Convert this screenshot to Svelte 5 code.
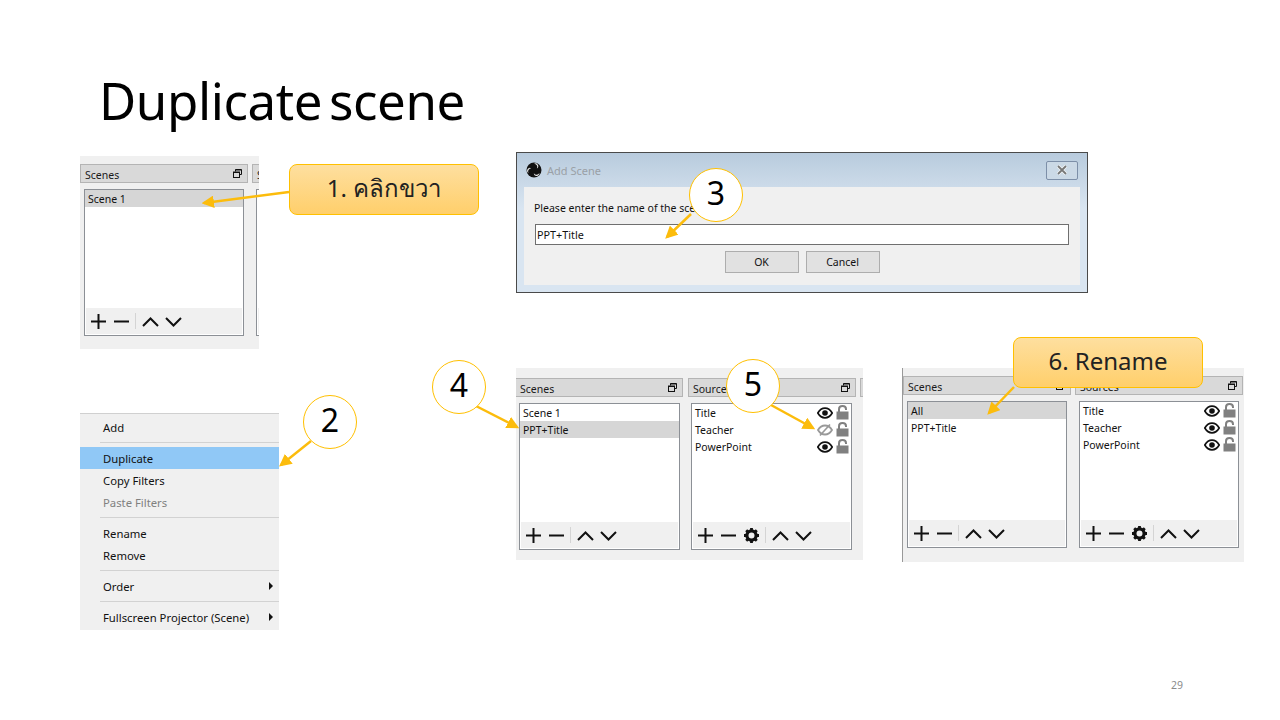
<script lang="ts">
  // Slide "Duplicate scene": OBS screenshots pinned on a slide, with callouts and arrows over them.
  const scenes1 = [{ name: "Scene 1", selected: true }];
  const scenes4 = [{ name: "Scene 1" }, { name: "PPT+Title", selected: true }];
  const scenes6 = [{ name: "All", selected: true }, { name: "PPT+Title" }];

  const sources4 = [
    { name: "Title" },
    { name: "Teacher", hidden: true },
    { name: "PowerPoint" }
  ];
  const sources6 = [{ name: "Title" }, { name: "Teacher" }, { name: "PowerPoint" }];

  const arrows = [
    [289, 192, 204, 203],
    [311, 441, 281, 465],
    [691, 214, 667, 237],
    [476, 406, 517, 427],
    [771, 405, 813, 428],
    [1014, 387, 989, 413]
  ];

  const circles = [
    { n: "2", cls: "c2" },
    { n: "3", cls: "c3" },
    { n: "4", cls: "c4" },
    { n: "5", cls: "c5" }
  ];

  const menu = [
    { label: "Add" },
    { sep: true },
    { label: "Duplicate", active: true },
    { label: "Copy Filters" },
    { label: "Paste Filters", disabled: true },
    { sep: true },
    { label: "Rename" },
    { label: "Remove" },
    { sep: true },
    { label: "Order", sub: true },
    { sep: true },
    { label: "Fullscreen Projector (Scene)", sub: true }
  ];
</script>

{#snippet toolbar(gear)}
  <div class="toolbar">
    <span class="tool">
      <svg width="17" height="17" viewBox="0 0 17 17"><path d="M8.5 1v15M1 8.5h15" class="ico" /></svg>
    </span>
    <span class="tool">
      <svg width="17" height="17" viewBox="0 0 17 17"><path d="M1 8.5h15" class="ico" /></svg>
    </span>
    {#if gear}
      <span class="tool">
        <svg width="17" height="17" viewBox="0 0 17 17">
          <circle cx="8.5" cy="8.5" r="4.6" fill="none" stroke="#111" stroke-width="3.2" />
          <path d="M8.5 1v15M1 8.5h15M3.2 3.2l10.6 10.6M13.8 3.2L3.2 13.8" stroke="#111" stroke-width="2.8" stroke-dasharray="2.6 9.8" fill="none" />
        </svg>
      </span>
    {/if}
    <span class="tool-sep"></span>
    <span class="tool">
      <svg width="17" height="17" viewBox="0 0 17 17"><path d="M1 13l7.5-7.5L16 13" class="ico" /></svg>
    </span>
    <span class="tool">
      <svg width="17" height="17" viewBox="0 0 17 17"><path d="M1 5l7.5 7.5L16 5" class="ico" /></svg>
    </span>
  </div>
{/snippet}

{#snippet dock(title, rows, isSources)}
  <div class="dock">
    <div class="dock-title">
      <span class="dock-name">{title}</span>
      <svg width="9" height="9" viewBox="0 0 9 9" class="restore">
        <path d="M2.500 2.500V.5h6v5H6.500" fill="none" stroke="#111" />
        <path d="M2.500 1h6" fill="none" stroke="#111" />
        <rect x=".5" y="3" width="6" height="5.500" fill="none" stroke="#111" />
        <path d="M.5 3.500h6" fill="none" stroke="#111" />
      </svg>
    </div>
    <div class="list">
      <div class="rows">
        {#each rows as row}
          <div class="row" class:selected={row.selected}>
            <span class="row-name">{row.name}</span>
            {#if isSources}
              {#if row.hidden}
                <svg width="16" height="12" viewBox="0 0 16 12" class="eye">
                  <path d="M1 6c1.800-3 4-4.500 7-4.500S13.200 3 15 6c-1.800 3-4 4.500-7 4.500S2.800 9 1 6z" fill="none" stroke="#999" stroke-width="1.800" />
                  <path d="M3 11.500L13 .5" stroke="#999" stroke-width="1.600" />
                </svg>
              {:else}
                <svg width="16" height="12" viewBox="0 0 16 12" class="eye">
                  <path d="M.8 6c1.900-3.200 4.200-4.800 7.200-4.800S13.300 2.800 15.200 6c-1.900 3.200-4.200 4.800-7.200 4.800S2.700 9.200.8 6z" fill="none" stroke="#111" stroke-width="1.700" />
                  <circle cx="8" cy="6" r="2.800" fill="#111" />
                </svg>
              {/if}
              <svg width="13" height="15" viewBox="0 0 13 15" class="lock">
                <path d="M3 7V4.200C3 2.300 4.500 1 6.500 1S10 2.300 10 4.200v.8" fill="none" stroke="#808080" stroke-width="2" />
                <rect x="0.500" y="6.500" width="12" height="8" fill="#808080" />
              </svg>
            {/if}
          </div>
        {/each}
      </div>
      {@render toolbar(isSources)}
    </div>
  </div>
{/snippet}

<main class="slide">
  <h1 class="heading">Duplicate scene</h1>

  <section class="shot shot1">
    {@render dock("Scenes", scenes1, false)}
    {@render dock("Sources", [], false)}
  </section>

  <section class="dialog">
    <header class="dialog-bar">
      <svg width="16" height="16" viewBox="0 0 16 16">
        <circle cx="8" cy="8" r="7.500" fill="#111" />
        <path d="M8 1.800A3.200 3.200 0 0 1 10.900 6.500A2.600 2.600 0 0 0 8 1.800z" fill="#e8e8e8" />
        <path d="M8 1.800A3.200 3.200 0 0 1 10.900 6.500A2.600 2.600 0 0 0 8 1.800z" fill="#e8e8e8" transform="rotate(120 8 8)" />
        <path d="M8 1.800A3.200 3.200 0 0 1 10.900 6.500A2.600 2.600 0 0 0 8 1.800z" fill="#e8e8e8" transform="rotate(240 8 8)" />
      </svg>
      <span class="dialog-title">Add Scene</span>
      <span class="dialog-close">
        <svg width="12" height="10" viewBox="0 0 12 10">
          <path d="M2 1l8 8M10 1L2 9" stroke="#f4f6f8" stroke-width="3.400" />
          <path d="M2 1l8 8M10 1L2 9" stroke="#777" stroke-width="1.800" />
        </svg>
      </span>
    </header>
    <div class="dialog-body">
      <p class="dialog-label">Please enter the name of the scene</p>
      <div class="dialog-input">PPT+Title</div>
      <div class="dialog-actions">
        <span class="btn">OK</span>
        <span class="btn">Cancel</span>
      </div>
    </div>
  </section>

  <nav class="menu">
    {#each menu as item}
      {#if item.sep}
        <div class="menu-sep"></div>
      {:else}
        <div class="menu-item" class:active={item.active} class:disabled={item.disabled}>
          <span>{item.label}</span>
          {#if item.sub}<i class="caret"></i>{/if}
        </div>
      {/if}
    {/each}
  </nav>

  <section class="shot shot4">
    {@render dock("Scenes", scenes4, false)}
    {@render dock("Sources", sources4, true)}
    {@render dock("", [], false)}
  </section>

  <section class="shot shot6">
    {@render dock("Scenes", scenes6, false)}
    {@render dock("Sources", sources6, true)}
  </section>

  <svg class="arrows" width="1280" height="720" viewBox="0 0 1280 720">
    <defs>
      <marker id="tip" markerWidth="5" markerHeight="5" refX="4" refY="2.500" orient="auto" markerUnits="strokeWidth">
        <path d="M0 0L5 2.500L0 5z" fill="#fcbc0c" />
      </marker>
    </defs>
    {#each arrows as [x1, y1, x2, y2]}
      <line {x1} {y1} {x2} {y2} stroke="#fcbc0c" stroke-width="2.500" marker-end="url(#tip)" />
    {/each}
  </svg>

  <div class="callout call1">1. คลิกขวา</div>
  <div class="callout call6">6. Rename</div>

  {#each circles as c}
    <div class="circle {c.cls}">{c.n}</div>
  {/each}

  <span class="page-no">29</span>
</main>

<style>
  :global(body) {
    margin: 0;
    background: #fff;
  }

  .slide {
    position: relative;
    width: 1280px;
    height: 720px;
    overflow: hidden;
    background: #fff;
    font-family: "Noto Sans", "Open Sans", sans-serif;
    color: #111;
  }

  .heading {
    position: absolute;
    left: 99px;
    top: 63px;
    margin: 0;
    font-size: 51px;
    font-weight: 400;
    letter-spacing: -0.4px;
    word-spacing: -6px;
    line-height: 74px;
    color: #000;
    white-space: nowrap;
  }

  /* screenshots */
  .shot {
    position: absolute;
    display: flex;
    gap: 4px;
    overflow: hidden;
    background: #f0f0f0;
  }

  .shot1 {
    left: 80px;
    top: 156px;
    width: 179px;
    height: 193px;
    padding-top: 8px;
    box-sizing: border-box;
  }

  .shot4 {
    left: 516px;
    top: 368px;
    width: 347px;
    height: 192px;
    padding-top: 10px;
    box-sizing: border-box;
  }

  .shot4 .dock:nth-child(1) {
    margin: 0 1px 0 -1px;
  }

  .shot4 .dock:nth-child(1) .list {
    margin-right: 3px;
  }

  .shot4 .dock:nth-child(2) .list {
    margin-left: 3px;
  }

  .shot6 {
    left: 902px;
    top: 368px;
    width: 342px;
    height: 194px;
    padding-top: 8px;
    box-sizing: border-box;
    border-left: 1px solid #999;
  }

  .dock {
    flex: 0 0 168px;
    width: 168px;
  }

  .dock-title {
    display: flex;
    align-items: center;
    justify-content: space-between;
    height: 19px;
    box-sizing: border-box;
    padding: 2px 5px 0 4px;
    background: #d9d9d9;
    border: 1px solid #b4b4b4;
    font-size: 10.500px;
    color: #1a1a1a;
  }

  .restore {
    flex: none;
    margin-top: -3px;
  }

  .list {
    display: flex;
    flex-direction: column;
    height: 147px;
    margin: 6px 4px 0;
    box-sizing: border-box;
    border: 1px solid #8c9096;
    background: #fff;
  }

  .rows {
    flex: 1;
    min-height: 0;
  }

  .row {
    display: flex;
    align-items: center;
    height: 17px;
    padding: 0 2px 0 3px;
    font-size: 10.500px;
    color: #111;
  }

  .row.selected {
    background: #d6d6d6;
  }

  .row-name {
    flex: 1;
  }

  .eye {
    flex: none;
    margin-right: 3px;
  }

  .lock {
    flex: none;
  }

  .toolbar {
    display: flex;
    align-items: center;
    height: 26px;
    margin: 0 1px 1px;
    padding-left: 1px;
    background: #f0f0f0;
  }

  .tool {
    display: flex;
    align-items: center;
    justify-content: center;
    width: 23px;
    height: 26px;
  }

  .ico {
    fill: none;
    stroke: #111;
    stroke-width: 2;
  }

  .tool-sep {
    width: 1px;
    height: 16px;
    margin: 0 3px 0 2px;
    background: #d4d4d4;
  }

  /* add scene dialog */
  .dialog {
    position: absolute;
    left: 516px;
    top: 152px;
    width: 572px;
    height: 141px;
    box-sizing: border-box;
    display: flex;
    flex-direction: column;
    border: 1px solid #4a4a4a;
    background: linear-gradient(#b8cbdd, #d9e5f1 40%);
    padding: 0 7px 7px;
  }

  .dialog-bar {
    display: flex;
    align-items: center;
    gap: 5px;
    height: 34px;
    flex: none;
    padding-left: 2px;
  }

  .dialog-title {
    flex: 1;
    font-size: 11px;
    color: #9aa0a6;
  }

  .dialog-close {
    display: flex;
    align-items: center;
    justify-content: center;
    width: 30px;
    height: 17px;
    margin-right: 2px;
    border: 1px solid #7d8fa8;
    border-radius: 2px;
    background: #cbd9e6;
  }

  .dialog-body {
    flex: 1;
    background: #f0f0f0;
    padding: 13px 11px 0 11px;
  }

  .dialog-label {
    margin: 0 0 0 -1px;
    height: 17px;
    line-height: 17px;
    font-size: 10.500px;
    color: #111;
  }

  .dialog-input {
    height: 21px;
    margin-top: 7px;
    box-sizing: border-box;
    border: 1px solid #6f6f6f;
    background: #fff;
    padding-left: 1px;
    line-height: 20px;
    font-size: 10.800px;
    color: #111;
  }

  .dialog-actions {
    display: flex;
    justify-content: center;
    gap: 7px;
    margin-top: 6px;
  }

  .btn {
    width: 74px;
    height: 22px;
    box-sizing: border-box;
    border: 1px solid #adadad;
    background: #e1e1e1;
    text-align: center;
    line-height: 20px;
    font-size: 10.500px;
    color: #111;
  }

  /* context menu */
  .menu {
    position: absolute;
    left: 80px;
    top: 413px;
    width: 199px;
    height: 217px;
    box-sizing: border-box;
    padding-top: 2px;
    border-top: 1px solid #d0d0d0;
    background: #f0f0f0;
  }

  .menu-item {
    display: flex;
    align-items: center;
    justify-content: space-between;
    height: 22px;
    padding: 0 6px 0 23px;
    font-size: 11.300px;
    color: #111;
  }

  .menu-item.active {
    background: #90c8f6;
  }

  .menu-item.disabled {
    color: #808080;
  }

  .caret {
    width: 0;
    height: 0;
    border-left: 4px solid #111;
    border-top: 4px solid transparent;
    border-bottom: 4px solid transparent;
  }

  .menu-sep {
    height: 1px;
    margin: 4px 0 4px 20px;
    background: #d2d2d2;
  }

  /* annotations */
  .arrows {
    position: absolute;
    left: 0;
    top: 0;
    pointer-events: none;
  }

  .callout {
    position: absolute;
    width: 190px;
    height: 51px;
    box-sizing: border-box;
    border: 1px solid #ffc000;
    border-radius: 8px;
    background: linear-gradient(#fedf9f, #ffcf6b);
    text-align: center;
    line-height: 45px;
    font-size: 24px;
    color: #222;
  }

  .call1 {
    left: 289px;
    top: 164px;
  }

  .call6 {
    left: 1013px;
    top: 337px;
  }

  .circle {
    position: absolute;
    width: 54px;
    height: 54px;
    box-sizing: border-box;
    border: 1px solid #ffc000;
    border-radius: 50%;
    background: #fff;
    text-align: center;
    line-height: 47px;
    font-size: 32px;
    color: #000;
  }

  .c2 { left: 303px; top: 395px; }
  .c3 { left: 689px; top: 168px; }
  .c4 { left: 432px; top: 360px; }
  .c5 { left: 726px; top: 359px; }

  .page-no {
    position: absolute;
    left: 1171px;
    top: 678px;
    font-size: 10.500px;
    color: #8b8b8b;
  }
</style>
